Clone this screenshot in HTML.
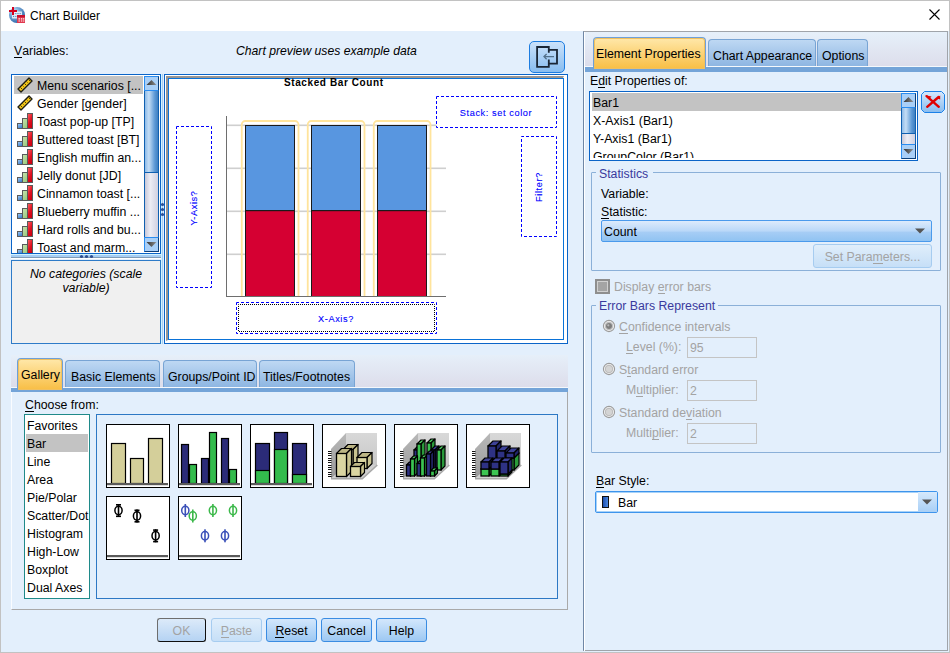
<!DOCTYPE html><html><head><meta charset="utf-8"><style>
html,body{margin:0;padding:0}
body{width:950px;height:653px;position:relative;overflow:hidden;background:#E3EFFC;font-family:"Liberation Sans",sans-serif;font-size:12.3px;color:#000}
div,svg{position:absolute;box-sizing:border-box}
.t{white-space:nowrap;line-height:14px}
u{text-decoration:none;border-bottom:1px solid currentColor;line-height:11px;display:inline-block}
.dis{color:#A3A3A3}
.btn{border:1px solid #3A8CE2;border-radius:3px;background:linear-gradient(#D3E7FC,#9DC8F3);text-align:center;line-height:14px;padding-top:5px}
.tab{border:1px solid #78A4D4;border-bottom:none;border-radius:4px 4px 0 0;background:linear-gradient(#BED8F3,#8EB6E2);line-height:14px;white-space:nowrap}
.tabsel{border:1px solid #6EA0D8;border-bottom:none;border-radius:4px 4px 0 0;box-shadow:inset 0 0 0 1px #F0C060;background:linear-gradient(#FFE8AA,#F8BE44);line-height:14px;white-space:nowrap}
</style></head><body>

<div style="left:0px;top:0px;width:950px;height:31px;background:#fff"></div>
<div style="left:0px;top:0px;width:950px;height:653px;border:1px solid #C2C2C2"></div>
<svg style="left:8px;top:6px" width="18" height="18" viewBox="0 0 18 18">
<defs><radialGradient id="gi" cx="35%" cy="30%" r="75%"><stop offset="0" stop-color="#D8ECFA"/><stop offset="0.4" stop-color="#7AAAD8"/><stop offset="1" stop-color="#2A64A8"/></radialGradient></defs>
<circle cx="9" cy="9" r="8" fill="url(#gi)"/>
<rect x="4" y="5.5" width="10" height="7" fill="#F2F6FB" opacity="0.85"/>
<path d="M5 7.6h8M5 10.4h8" stroke="#4A80C0" stroke-width="1" stroke-dasharray="1.2 1"/>
<rect x="1" y="4" width="8" height="2" fill="#D4001E"/><rect x="4" y="1" width="2" height="8" fill="#D4001E"/>
<rect x="9" y="9" width="8" height="8" fill="#E0384E"/><rect x="9" y="9" width="8" height="2.2" fill="#C8102E"/>
<path d="M10.5 12.2h1.4v1.2h-1.4zM12.9 12.2h1.4v1.2h-1.4zM15.1 12.2h1.2v1.2h-1.2zM10.5 14.4h1.4v1.2h-1.4zM12.9 14.4h1.4v1.2h-1.4zM15.1 14.4h1.2v1.2h-1.2z" fill="#fff"/>
</svg>
<div class="t" style="left:30px;top:9px;font-size:12px">Chart Builder</div>
<svg style="left:929px;top:9px" width="11" height="11" viewBox="0 0 11 11"><path d="M0.5 0.5L10.5 10.5M10.5 0.5L0.5 10.5" stroke="#000" stroke-width="1.1"/></svg>
<div class="t" style="left:14px;top:44px;"><u>V</u>ariables:</div>
<div class="t" style="left:236px;top:44px;font-style:italic;font-size:12.2px">Chart preview uses example data</div>
<div style="left:529px;top:41px;width:36px;height:32px;border:1px solid #1C7CE0;border-radius:5px;background:linear-gradient(#CBE2FA,#88BDF0)"></div>
<svg style="left:536px;top:46px" width="23" height="23" viewBox="0 0 23 23">
<path d="M12.8 6.8V1H1.1V20.9H12.8V13.6" fill="none" stroke="#1A2635" stroke-width="1.8"/>
<path d="M12.8 3.9H21V17.7H12.8" fill="none" stroke="#1A2635" stroke-width="1.8"/>
<path d="M8 10.6H18M10.6 8L8 10.6L10.6 13.2" fill="none" stroke="#52708A" stroke-width="1.3"/>
</svg>
<div style="left:11px;top:74px;width:150px;height:180px;background:#fff;border:1px solid #0A64C8"></div>
<div style="left:14px;top:76px;width:129px;height:18px;background:#C3C3C3"></div>
<div style="left:12px;top:75px;width:132px;height:178px;overflow:hidden">
<svg style="left:5px;top:2px" width="16" height="16" viewBox="0 0 16 16">
<path d="M1 12L12 1L15 4L4 15Z" fill="#F5C816" stroke="#1E1E14" stroke-width="1.4" stroke-linejoin="round"/>
<path d="M3.6 10.6l1.3 1.3M5.6 8.6l0.9 0.9M7.6 6.6l1.3 1.3M9.6 4.6l0.9 0.9M11.6 2.6l1.3 1.3" stroke="#3A3010" stroke-width="1"/>
</svg>
<div class="t" style="left:25px;top:4px">Menu scenarios [...</div>
<svg style="left:5px;top:20px" width="16" height="16" viewBox="0 0 16 16">
<path d="M1 12L12 1L15 4L4 15Z" fill="#F5C816" stroke="#1E1E14" stroke-width="1.4" stroke-linejoin="round"/>
<path d="M3.6 10.6l1.3 1.3M5.6 8.6l0.9 0.9M7.6 6.6l1.3 1.3M9.6 4.6l0.9 0.9M11.6 2.6l1.3 1.3" stroke="#3A3010" stroke-width="1"/>
</svg>
<div class="t" style="left:25px;top:22px">Gender [gender]</div>
<svg style="left:5px;top:38px" width="17" height="17" viewBox="0 0 17 17">
<rect x="0.5" y="10.5" width="5" height="5" fill="url(#ob)" stroke="#5A5A5A" stroke-width="1"/>
<defs><linearGradient id="og" x1="0" y1="0" x2="0.6" y2="1"><stop offset="0" stop-color="#C8E4B0"/><stop offset="1" stop-color="#9CCB80"/></linearGradient><linearGradient id="or" x1="0" y1="0" x2="0.7" y2="1"><stop offset="0" stop-color="#FF6A6A"/><stop offset="0.6" stop-color="#E01020"/><stop offset="1" stop-color="#C80010"/></linearGradient><linearGradient id="ob" x1="0" y1="0" x2="0.6" y2="1"><stop offset="0" stop-color="#A8D0F8"/><stop offset="1" stop-color="#3A7CC8"/></linearGradient></defs>
<rect x="5.5" y="5.5" width="5" height="10" fill="url(#og)" stroke="#5A5A5A" stroke-width="1"/>
<rect x="10.5" y="0.5" width="5" height="15" fill="url(#or)" stroke="#5A5A5A" stroke-width="1"/>
</svg>
<div class="t" style="left:25px;top:40px">Toast pop-up [TP]</div>
<svg style="left:5px;top:56px" width="17" height="17" viewBox="0 0 17 17">
<rect x="0.5" y="10.5" width="5" height="5" fill="url(#ob)" stroke="#5A5A5A" stroke-width="1"/>
<defs><linearGradient id="og" x1="0" y1="0" x2="0.6" y2="1"><stop offset="0" stop-color="#C8E4B0"/><stop offset="1" stop-color="#9CCB80"/></linearGradient><linearGradient id="or" x1="0" y1="0" x2="0.7" y2="1"><stop offset="0" stop-color="#FF6A6A"/><stop offset="0.6" stop-color="#E01020"/><stop offset="1" stop-color="#C80010"/></linearGradient><linearGradient id="ob" x1="0" y1="0" x2="0.6" y2="1"><stop offset="0" stop-color="#A8D0F8"/><stop offset="1" stop-color="#3A7CC8"/></linearGradient></defs>
<rect x="5.5" y="5.5" width="5" height="10" fill="url(#og)" stroke="#5A5A5A" stroke-width="1"/>
<rect x="10.5" y="0.5" width="5" height="15" fill="url(#or)" stroke="#5A5A5A" stroke-width="1"/>
</svg>
<div class="t" style="left:25px;top:58px">Buttered toast [BT]</div>
<svg style="left:5px;top:74px" width="17" height="17" viewBox="0 0 17 17">
<rect x="0.5" y="10.5" width="5" height="5" fill="url(#ob)" stroke="#5A5A5A" stroke-width="1"/>
<defs><linearGradient id="og" x1="0" y1="0" x2="0.6" y2="1"><stop offset="0" stop-color="#C8E4B0"/><stop offset="1" stop-color="#9CCB80"/></linearGradient><linearGradient id="or" x1="0" y1="0" x2="0.7" y2="1"><stop offset="0" stop-color="#FF6A6A"/><stop offset="0.6" stop-color="#E01020"/><stop offset="1" stop-color="#C80010"/></linearGradient><linearGradient id="ob" x1="0" y1="0" x2="0.6" y2="1"><stop offset="0" stop-color="#A8D0F8"/><stop offset="1" stop-color="#3A7CC8"/></linearGradient></defs>
<rect x="5.5" y="5.5" width="5" height="10" fill="url(#og)" stroke="#5A5A5A" stroke-width="1"/>
<rect x="10.5" y="0.5" width="5" height="15" fill="url(#or)" stroke="#5A5A5A" stroke-width="1"/>
</svg>
<div class="t" style="left:25px;top:76px">English muffin an...</div>
<svg style="left:5px;top:92px" width="17" height="17" viewBox="0 0 17 17">
<rect x="0.5" y="10.5" width="5" height="5" fill="url(#ob)" stroke="#5A5A5A" stroke-width="1"/>
<defs><linearGradient id="og" x1="0" y1="0" x2="0.6" y2="1"><stop offset="0" stop-color="#C8E4B0"/><stop offset="1" stop-color="#9CCB80"/></linearGradient><linearGradient id="or" x1="0" y1="0" x2="0.7" y2="1"><stop offset="0" stop-color="#FF6A6A"/><stop offset="0.6" stop-color="#E01020"/><stop offset="1" stop-color="#C80010"/></linearGradient><linearGradient id="ob" x1="0" y1="0" x2="0.6" y2="1"><stop offset="0" stop-color="#A8D0F8"/><stop offset="1" stop-color="#3A7CC8"/></linearGradient></defs>
<rect x="5.5" y="5.5" width="5" height="10" fill="url(#og)" stroke="#5A5A5A" stroke-width="1"/>
<rect x="10.5" y="0.5" width="5" height="15" fill="url(#or)" stroke="#5A5A5A" stroke-width="1"/>
</svg>
<div class="t" style="left:25px;top:94px">Jelly donut [JD]</div>
<svg style="left:5px;top:110px" width="17" height="17" viewBox="0 0 17 17">
<rect x="0.5" y="10.5" width="5" height="5" fill="url(#ob)" stroke="#5A5A5A" stroke-width="1"/>
<defs><linearGradient id="og" x1="0" y1="0" x2="0.6" y2="1"><stop offset="0" stop-color="#C8E4B0"/><stop offset="1" stop-color="#9CCB80"/></linearGradient><linearGradient id="or" x1="0" y1="0" x2="0.7" y2="1"><stop offset="0" stop-color="#FF6A6A"/><stop offset="0.6" stop-color="#E01020"/><stop offset="1" stop-color="#C80010"/></linearGradient><linearGradient id="ob" x1="0" y1="0" x2="0.6" y2="1"><stop offset="0" stop-color="#A8D0F8"/><stop offset="1" stop-color="#3A7CC8"/></linearGradient></defs>
<rect x="5.5" y="5.5" width="5" height="10" fill="url(#og)" stroke="#5A5A5A" stroke-width="1"/>
<rect x="10.5" y="0.5" width="5" height="15" fill="url(#or)" stroke="#5A5A5A" stroke-width="1"/>
</svg>
<div class="t" style="left:25px;top:112px">Cinnamon toast [...</div>
<svg style="left:5px;top:128px" width="17" height="17" viewBox="0 0 17 17">
<rect x="0.5" y="10.5" width="5" height="5" fill="url(#ob)" stroke="#5A5A5A" stroke-width="1"/>
<defs><linearGradient id="og" x1="0" y1="0" x2="0.6" y2="1"><stop offset="0" stop-color="#C8E4B0"/><stop offset="1" stop-color="#9CCB80"/></linearGradient><linearGradient id="or" x1="0" y1="0" x2="0.7" y2="1"><stop offset="0" stop-color="#FF6A6A"/><stop offset="0.6" stop-color="#E01020"/><stop offset="1" stop-color="#C80010"/></linearGradient><linearGradient id="ob" x1="0" y1="0" x2="0.6" y2="1"><stop offset="0" stop-color="#A8D0F8"/><stop offset="1" stop-color="#3A7CC8"/></linearGradient></defs>
<rect x="5.5" y="5.5" width="5" height="10" fill="url(#og)" stroke="#5A5A5A" stroke-width="1"/>
<rect x="10.5" y="0.5" width="5" height="15" fill="url(#or)" stroke="#5A5A5A" stroke-width="1"/>
</svg>
<div class="t" style="left:25px;top:130px">Blueberry muffin ...</div>
<svg style="left:5px;top:146px" width="17" height="17" viewBox="0 0 17 17">
<rect x="0.5" y="10.5" width="5" height="5" fill="url(#ob)" stroke="#5A5A5A" stroke-width="1"/>
<defs><linearGradient id="og" x1="0" y1="0" x2="0.6" y2="1"><stop offset="0" stop-color="#C8E4B0"/><stop offset="1" stop-color="#9CCB80"/></linearGradient><linearGradient id="or" x1="0" y1="0" x2="0.7" y2="1"><stop offset="0" stop-color="#FF6A6A"/><stop offset="0.6" stop-color="#E01020"/><stop offset="1" stop-color="#C80010"/></linearGradient><linearGradient id="ob" x1="0" y1="0" x2="0.6" y2="1"><stop offset="0" stop-color="#A8D0F8"/><stop offset="1" stop-color="#3A7CC8"/></linearGradient></defs>
<rect x="5.5" y="5.5" width="5" height="10" fill="url(#og)" stroke="#5A5A5A" stroke-width="1"/>
<rect x="10.5" y="0.5" width="5" height="15" fill="url(#or)" stroke="#5A5A5A" stroke-width="1"/>
</svg>
<div class="t" style="left:25px;top:148px">Hard rolls and bu...</div>
<svg style="left:5px;top:164px" width="17" height="17" viewBox="0 0 17 17">
<rect x="0.5" y="10.5" width="5" height="5" fill="url(#ob)" stroke="#5A5A5A" stroke-width="1"/>
<defs><linearGradient id="og" x1="0" y1="0" x2="0.6" y2="1"><stop offset="0" stop-color="#C8E4B0"/><stop offset="1" stop-color="#9CCB80"/></linearGradient><linearGradient id="or" x1="0" y1="0" x2="0.7" y2="1"><stop offset="0" stop-color="#FF6A6A"/><stop offset="0.6" stop-color="#E01020"/><stop offset="1" stop-color="#C80010"/></linearGradient><linearGradient id="ob" x1="0" y1="0" x2="0.6" y2="1"><stop offset="0" stop-color="#A8D0F8"/><stop offset="1" stop-color="#3A7CC8"/></linearGradient></defs>
<rect x="5.5" y="5.5" width="5" height="10" fill="url(#og)" stroke="#5A5A5A" stroke-width="1"/>
<rect x="10.5" y="0.5" width="5" height="15" fill="url(#or)" stroke="#5A5A5A" stroke-width="1"/>
</svg>
<div class="t" style="left:25px;top:166px">Toast and marm...</div>
</div>
<div style="left:144px;top:76px;width:15px;height:176px;background:linear-gradient(90deg,#C8C8D8,#EDEDF5 40%,#D0D0E0);border:1px solid #1060B0"></div>
<div style="left:144px;top:90px;width:15px;height:83px;background:linear-gradient(90deg,#8EBBE8,#C4DDF5 30%,#5C99D6 75%,#3F7FC0);border:1px solid #1060B0"></div>
<div style="left:144px;top:76px;width:15px;height:15px;background:#A9CFF7;border:1px solid #2A8CF0;border-right-color:#0B3F7A"></div>
<div style="left:144px;top:237px;width:15px;height:15px;background:#A9CFF7;border:1px solid #2A8CF0;border-right-color:#0B3F7A;border-bottom-color:#0B3F7A"></div>
<svg style="left:146px;top:79px" width="11" height="7"><defs><linearGradient id="ag" x1="0" x2="1"><stop offset="0" stop-color="#303030"/><stop offset="1" stop-color="#909090"/></linearGradient></defs><path d="M0.5 6L5.5 1L10.5 6Z" fill="url(#ag)"/></svg>
<svg style="left:146px;top:241px" width="11" height="7"><path d="M0.5 1L5.5 6L10.5 1Z" fill="url(#ag)"/></svg>
<div style="left:161px;top:74px;width:1px;height:270px;background:#D2F4FF"></div>
<div style="left:162px;top:74px;width:1px;height:270px;background:#A6CDF3"></div>
<svg style="left:160px;top:201px" width="5" height="16"><circle cx="2.5" cy="3.5" r="1.6" fill="#2E4E90"/><circle cx="2.5" cy="8.5" r="1.6" fill="#2E4E90"/><circle cx="2.5" cy="13.5" r="1.6" fill="#2E4E90"/></svg>
<div style="left:11px;top:254px;width:150px;height:1px;background:#D2F4FF"></div>
<div style="left:11px;top:255px;width:150px;height:2px;background:#A6CDF3"></div>
<div style="left:11px;top:257px;width:150px;height:1px;background:#7E9CB8"></div>
<div style="left:11px;top:258px;width:150px;height:1px;background:#FFFFFF"></div>
<svg style="left:78px;top:254px" width="16" height="5"><circle cx="3.5" cy="2.5" r="1.6" fill="#2E4E90"/><circle cx="8.5" cy="2.5" r="1.6" fill="#2E4E90"/><circle cx="13.5" cy="2.5" r="1.6" fill="#2E4E90"/></svg>
<div style="left:11px;top:260px;width:150px;height:84px;background:#F0F0F0;border:1px solid #2E7BC8"></div>
<div class="t" style="left:16.0px;top:267px;width:140px;text-align:center;font-style:italic">No categories (scale</div>
<div class="t" style="left:16.0px;top:281px;width:140px;text-align:center;font-style:italic">variable)</div>
<div style="left:164px;top:74px;width:404px;height:270px;border:1px solid #0A64C8;background:#fff"></div>
<div style="left:166px;top:76px;width:398px;height:265px;border-top:2px solid #9A9590;border-left:2px solid #9A9590;border-right:1px solid #fff;border-bottom:1px solid #fff"></div>
<div style="left:168px;top:78px;width:396px;height:262px;border:1px solid #0A72D8;background:#fff"></div>
<svg style="left:0;top:0" width="950" height="653" viewBox="0 0 950 653"><rect x="227" y="124.5" width="219" height="1.6" fill="#CFCFCF"/><rect x="227" y="167.5" width="219" height="1.6" fill="#CFCFCF"/><rect x="227" y="210.5" width="219" height="1.6" fill="#CFCFCF"/><rect x="227" y="253.5" width="219" height="1.6" fill="#CFCFCF"/><rect x="226" y="116" width="1" height="181" fill="#6E6E6E"/><rect x="226" y="296" width="220" height="1" fill="#6E6E6E"/><rect x="241.75" y="121" width="56.75" height="180" rx="3.5" fill="none" stroke="#FFE49C" stroke-width="1.8"/><rect x="307.75" y="121" width="56.75" height="180" rx="3.5" fill="none" stroke="#FFE49C" stroke-width="1.8"/><rect x="373.75" y="121" width="56.75" height="180" rx="3.5" fill="none" stroke="#FFE49C" stroke-width="1.8"/><rect x="245" y="125" width="50" height="86" fill="#5896E0"/><rect x="245" y="211" width="50" height="85" fill="#D50032"/><rect x="245.5" y="125.5" width="49" height="171" fill="none" stroke="#1A1A1A" stroke-width="1"/><rect x="245" y="210" width="50" height="1.2" fill="#1A1A1A"/><rect x="311" y="125" width="50" height="86" fill="#5896E0"/><rect x="311" y="211" width="50" height="85" fill="#D50032"/><rect x="311.5" y="125.5" width="49" height="171" fill="none" stroke="#1A1A1A" stroke-width="1"/><rect x="311" y="210" width="50" height="1.2" fill="#1A1A1A"/><rect x="377" y="125" width="50" height="86" fill="#5896E0"/><rect x="377" y="211" width="50" height="85" fill="#D50032"/><rect x="377.5" y="125.5" width="49" height="171" fill="none" stroke="#1A1A1A" stroke-width="1"/><rect x="377" y="210" width="50" height="1.2" fill="#1A1A1A"/><rect x="230" y="297" width="210" height="5" fill="#fff"/><rect x="226" y="296" width="220" height="1" fill="#6E6E6E"/><rect x="436.5" y="96.5" width="120" height="31" fill="#fff" stroke="#0000FF" stroke-width="1" stroke-dasharray="3 2" stroke-dashoffset="0.5"/><rect x="521.5" y="136.5" width="35" height="100" fill="#fff" stroke="#0000FF" stroke-width="1" stroke-dasharray="3 2" stroke-dashoffset="0.5"/><rect x="176.5" y="126.5" width="35" height="161" fill="#fff" stroke="#0000FF" stroke-width="1" stroke-dasharray="3 2" stroke-dashoffset="0.5"/><rect x="236.5" y="302.5" width="200" height="31" fill="#fff" stroke="#0000FF" stroke-width="1" stroke-dasharray="3 2" stroke-dashoffset="0.5"/><rect x="238.5" y="304.5" width="196" height="27" fill="none" stroke="#000" stroke-width="1" stroke-dasharray="1 1" stroke-dashoffset="0.5"/></svg>
<div class="t" style="left:284px;top:77px;font-size:10px;font-weight:bold;letter-spacing:0.6px;line-height:12px">Stacked Bar Count</div>
<div class="t" style="left:446px;top:107px;width:100px;text-align:center;font-size:9.2px;letter-spacing:0.6px;color:#0000FF;-webkit-text-stroke:0.1px #0000FF;line-height:12px">Stack: set color</div>
<div class="t" style="left:286px;top:313px;width:100px;text-align:center;font-size:9.2px;letter-spacing:0.6px;color:#0000FF;-webkit-text-stroke:0.1px #0000FF;line-height:12px">X-Axis?</div>
<div class="t" style="left:144px;top:202px;width:100px;text-align:center;font-size:9.2px;letter-spacing:0.6px;color:#0000FF;-webkit-text-stroke:0.1px #0000FF;line-height:12px;transform:rotate(-90deg)">Y-Axis?</div>
<div class="t" style="left:489px;top:181px;width:100px;text-align:center;font-size:9.2px;letter-spacing:0.6px;color:#0000FF;-webkit-text-stroke:0.1px #0000FF;line-height:12px;transform:rotate(-90deg)">Filter?</div>
<div style="left:11px;top:355px;width:557px;height:34px;background:linear-gradient(#E6EFF9,#DCDCEA)"></div>
<div style="left:11px;top:387px;width:557px;height:1px;background:#F4F8FC"></div>
<div style="left:11px;top:388px;width:557px;height:4px;background:#74A4D8"></div>
<div style="left:11px;top:392px;width:557px;height:218px;border:1px solid #A9A9A9;border-top:none;border-left-color:#FAFCFF;background:#E3EFFC"></div>
<div class="tab" style="left:65px;top:360px;width:95px;height:27px;padding:9px 0 0 5px">Basic Elements</div>
<div class="tab" style="left:163px;top:360px;width:94px;height:27px;padding:9px 0 0 4px">Groups/Point ID</div>
<div class="tab" style="left:259px;top:360px;width:96px;height:27px;padding:9px 0 0 3px">Titles/Footnotes</div>
<div class="tabsel" style="left:17px;top:358px;width:46px;height:32px;padding:9px 0 0 3px">Gallery</div>
<div class="t" style="left:25px;top:398px;"><u>C</u>hoose from:</div>
<div style="left:24px;top:414px;width:66px;height:185px;background:#fff;border:1px solid #1F8A8A"></div>
<div style="left:26px;top:434px;width:62px;height:18px;background:#C3C3C3"></div>
<div class="t" style="left:27px;top:419px;">Favorites</div>
<div class="t" style="left:27px;top:437px;">Bar</div>
<div class="t" style="left:27px;top:455px;">Line</div>
<div class="t" style="left:27px;top:473px;">Area</div>
<div class="t" style="left:27px;top:491px;">Pie/Polar</div>
<div class="t" style="left:27px;top:509px;">Scatter/Dot</div>
<div class="t" style="left:27px;top:527px;">Histogram</div>
<div class="t" style="left:27px;top:545px;">High-Low</div>
<div class="t" style="left:27px;top:563px;">Boxplot</div>
<div class="t" style="left:27px;top:581px;">Dual Axes</div>
<div style="left:96px;top:414px;width:462px;height:185px;border:1px solid #2D78C4"></div>
<svg style="left:106px;top:424px" width="64" height="64" viewBox="0 0 64 64"><rect x="0.5" y="0.5" width="63" height="63" fill="#fff" stroke="#000" stroke-width="1"/><rect x="5.5" y="19.5" width="14" height="40" fill="#D4CF9A" stroke="#000" stroke-width="1.2"/><rect x="24.5" y="34.5" width="13" height="25" fill="#D4CF9A" stroke="#000" stroke-width="1.2"/><rect x="42.5" y="14.5" width="14" height="45" fill="#D4CF9A" stroke="#000" stroke-width="1.2"/><rect x="1" y="59" width="61" height="2.2" fill="#5A5A5A"/></svg>
<svg style="left:178px;top:424px" width="64" height="64" viewBox="0 0 64 64"><rect x="0.5" y="0.5" width="63" height="63" fill="#fff" stroke="#000" stroke-width="1"/><rect x="3.5" y="20.5" width="7" height="39" fill="#2B2B78" stroke="#000" stroke-width="1.2"/><rect x="11.5" y="40.5" width="7" height="19" fill="#33BB4C" stroke="#000" stroke-width="1.2"/><rect x="23.5" y="34.5" width="7" height="25" fill="#2B2B78" stroke="#000" stroke-width="1.2"/><rect x="31.5" y="8.5" width="7" height="51" fill="#33BB4C" stroke="#000" stroke-width="1.2"/><rect x="43.5" y="14.5" width="7" height="45" fill="#2B2B78" stroke="#000" stroke-width="1.2"/><rect x="51.5" y="45.5" width="7" height="14" fill="#33BB4C" stroke="#000" stroke-width="1.2"/><rect x="1" y="59" width="61" height="2.2" fill="#5A5A5A"/></svg>
<svg style="left:250px;top:424px" width="64" height="64" viewBox="0 0 64 64"><rect x="0.5" y="0.5" width="63" height="63" fill="#fff" stroke="#000" stroke-width="1"/><rect x="5.5" y="19.5" width="14" height="40" fill="#2B2B78" stroke="#000" stroke-width="1.2"/><rect x="5.5" y="46.5" width="14" height="13" fill="#33BB4C" stroke="#000" stroke-width="1.2"/><rect x="24.5" y="8.5" width="13" height="51" fill="#2B2B78" stroke="#000" stroke-width="1.2"/><rect x="24.5" y="25.5" width="13" height="34" fill="#33BB4C" stroke="#000" stroke-width="1.2"/><rect x="42.5" y="19.5" width="14" height="40" fill="#2B2B78" stroke="#000" stroke-width="1.2"/><rect x="42.5" y="50.5" width="14" height="9" fill="#33BB4C" stroke="#000" stroke-width="1.2"/><rect x="1" y="59" width="61" height="2.2" fill="#5A5A5A"/></svg>
<svg style="left:322px;top:424px" width="64" height="64" viewBox="0 0 64 64"><rect x="0.5" y="0.5" width="63" height="63" fill="#fff" stroke="#000" stroke-width="1"/><defs><linearGradient id="wl" x1="0" y1="0" x2="0" y2="1"><stop offset="0" stop-color="#B8B8B8"/><stop offset="1" stop-color="#9A9A9A"/></linearGradient><linearGradient id="wb" x1="0" y1="0" x2="0" y2="1"><stop offset="0" stop-color="#D8D8D8"/><stop offset="1" stop-color="#C8C8C8"/></linearGradient></defs><path d="M9 25L24 9V41L9 55Z" fill="url(#wl)"/><path d="M24 9H55V41H24Z" fill="url(#wb)"/><path d="M9 55H40L55 41H24Z" fill="#D0D0D0"/><path d="M9 54.8H40.3L55.3 41" fill="none" stroke="#A8A8A8" stroke-width="1.6"/><rect x="6" y="27" width="3.5" height="1" fill="#111"/><rect x="6" y="29" width="3.5" height="1" fill="#111"/><rect x="6" y="31" width="3.5" height="1" fill="#111"/><rect x="6" y="34" width="3.5" height="1" fill="#111"/><rect x="6" y="36" width="3.5" height="1" fill="#111"/><rect x="6" y="38" width="3.5" height="1" fill="#111"/><rect x="6" y="41" width="3.5" height="1" fill="#111"/><rect x="6" y="43" width="3.5" height="1" fill="#111"/><rect x="6" y="45" width="3.5" height="1" fill="#111"/><rect x="6" y="48" width="3.5" height="1" fill="#111"/><rect x="6" y="50" width="3.5" height="1" fill="#111"/><rect x="6" y="52" width="3.5" height="1" fill="#111"/><path d="M21 25.5L26 20.5H36L31 25.5Z" fill="#BDB685" stroke="#000" stroke-width="1.2" stroke-linejoin="round"/><path d="M31 25.5L36 20.5V41.5L31 46.5Z" fill="#C9C390" stroke="#000" stroke-width="1.2" stroke-linejoin="round"/><rect x="21" y="25.5" width="10" height="21" fill="#DAD5A2" stroke="#000" stroke-width="1.3"/><path d="M35 33.5L40 28.5H50L45 33.5Z" fill="#BDB685" stroke="#000" stroke-width="1.2" stroke-linejoin="round"/><path d="M45 33.5L50 28.5V39.5L45 44.5Z" fill="#C9C390" stroke="#000" stroke-width="1.2" stroke-linejoin="round"/><rect x="35" y="33.5" width="10" height="11" fill="#DAD5A2" stroke="#000" stroke-width="1.3"/><path d="M14.5 29.5L19.5 24.5H29.5L24.5 29.5Z" fill="#BDB685" stroke="#000" stroke-width="1.2" stroke-linejoin="round"/><path d="M24.5 29.5L29.5 24.5V47.5L24.5 52.5Z" fill="#C9C390" stroke="#000" stroke-width="1.2" stroke-linejoin="round"/><rect x="14.5" y="29.5" width="10" height="23" fill="#DAD5A2" stroke="#000" stroke-width="1.3"/><path d="M28.5 42.5L32.5 38.5H42.5L38.5 42.5Z" fill="#BDB685" stroke="#000" stroke-width="1.2" stroke-linejoin="round"/><path d="M38.5 42.5L42.5 38.5V48.5L38.5 52.5Z" fill="#C9C390" stroke="#000" stroke-width="1.2" stroke-linejoin="round"/><rect x="28.5" y="42.5" width="10" height="10" fill="#DAD5A2" stroke="#000" stroke-width="1.3"/></svg>
<svg style="left:394px;top:424px" width="64" height="64" viewBox="0 0 64 64"><rect x="0.5" y="0.5" width="63" height="63" fill="#fff" stroke="#000" stroke-width="1"/><defs><linearGradient id="wl" x1="0" y1="0" x2="0" y2="1"><stop offset="0" stop-color="#B8B8B8"/><stop offset="1" stop-color="#9A9A9A"/></linearGradient><linearGradient id="wb" x1="0" y1="0" x2="0" y2="1"><stop offset="0" stop-color="#D8D8D8"/><stop offset="1" stop-color="#C8C8C8"/></linearGradient></defs><path d="M9 25L24 9V41L9 55Z" fill="url(#wl)"/><path d="M24 9H55V41H24Z" fill="url(#wb)"/><path d="M9 55H40L55 41H24Z" fill="#D0D0D0"/><path d="M9 54.8H40.3L55.3 41" fill="none" stroke="#A8A8A8" stroke-width="1.6"/><rect x="6" y="27" width="3.5" height="1" fill="#111"/><rect x="6" y="29" width="3.5" height="1" fill="#111"/><rect x="6" y="31" width="3.5" height="1" fill="#111"/><rect x="6" y="34" width="3.5" height="1" fill="#111"/><rect x="6" y="36" width="3.5" height="1" fill="#111"/><rect x="6" y="38" width="3.5" height="1" fill="#111"/><rect x="6" y="41" width="3.5" height="1" fill="#111"/><rect x="6" y="43" width="3.5" height="1" fill="#111"/><rect x="6" y="45" width="3.5" height="1" fill="#111"/><rect x="6" y="48" width="3.5" height="1" fill="#111"/><rect x="6" y="50" width="3.5" height="1" fill="#111"/><rect x="6" y="52" width="3.5" height="1" fill="#111"/><path d="M20 26L24 22H28L24 26Z" fill="#3E4298" stroke="#000" stroke-width="1.2" stroke-linejoin="round"/><path d="M24 26L28 22V42L24 46Z" fill="#22256A" stroke="#000" stroke-width="1.2" stroke-linejoin="round"/><rect x="20" y="26" width="4" height="20" fill="#2E3284" stroke="#000" stroke-width="1.3"/><path d="M23 20L27 16H31L27 20Z" fill="#4CD060" stroke="#000" stroke-width="1.2" stroke-linejoin="round"/><path d="M27 20L31 16V42L27 46Z" fill="#2A9A3A" stroke="#000" stroke-width="1.2" stroke-linejoin="round"/><rect x="23" y="20" width="4" height="26" fill="#3CC452" stroke="#000" stroke-width="1.3"/><path d="M33 19L37 15H41L37 19Z" fill="#4CD060" stroke="#000" stroke-width="1.2" stroke-linejoin="round"/><path d="M37 19L41 15V42L37 46Z" fill="#2A9A3A" stroke="#000" stroke-width="1.2" stroke-linejoin="round"/><rect x="33" y="19" width="4" height="27" fill="#3CC452" stroke="#000" stroke-width="1.3"/><path d="M37 26L41 22H45L41 26Z" fill="#3E4298" stroke="#000" stroke-width="1.2" stroke-linejoin="round"/><path d="M41 26L45 22V42L41 46Z" fill="#22256A" stroke="#000" stroke-width="1.2" stroke-linejoin="round"/><rect x="37" y="26" width="4" height="20" fill="#2E3284" stroke="#000" stroke-width="1.3"/><path d="M43 26L47 22H51L47 26Z" fill="#4CD060" stroke="#000" stroke-width="1.2" stroke-linejoin="round"/><path d="M47 26L51 22V42L47 46Z" fill="#2A9A3A" stroke="#000" stroke-width="1.2" stroke-linejoin="round"/><rect x="43" y="26" width="4" height="20" fill="#3CC452" stroke="#000" stroke-width="1.3"/><path d="M12.5 41L15.5 38H19.5L16.5 41Z" fill="#3E4298" stroke="#000" stroke-width="1.2" stroke-linejoin="round"/><path d="M16.5 41L19.5 38V49L16.5 52Z" fill="#22256A" stroke="#000" stroke-width="1.2" stroke-linejoin="round"/><rect x="12.5" y="41" width="4" height="11" fill="#2E3284" stroke="#000" stroke-width="1.3"/><path d="M16.5 35L19.5 32H23.5L20.5 35Z" fill="#4CD060" stroke="#000" stroke-width="1.2" stroke-linejoin="round"/><path d="M20.5 35L23.5 32V49L20.5 52Z" fill="#2A9A3A" stroke="#000" stroke-width="1.2" stroke-linejoin="round"/><rect x="16.5" y="35" width="4" height="17" fill="#3CC452" stroke="#000" stroke-width="1.3"/><path d="M23 39.5L26 36.5H30L27 39.5Z" fill="#3E4298" stroke="#000" stroke-width="1.2" stroke-linejoin="round"/><path d="M27 39.5L30 36.5V49.0L27 52.0Z" fill="#22256A" stroke="#000" stroke-width="1.2" stroke-linejoin="round"/><rect x="23" y="39.5" width="4" height="12.5" fill="#2E3284" stroke="#000" stroke-width="1.3"/><path d="M26.5 34L29.5 31H33.5L30.5 34Z" fill="#4CD060" stroke="#000" stroke-width="1.2" stroke-linejoin="round"/><path d="M30.5 34L33.5 31V49L30.5 52Z" fill="#2A9A3A" stroke="#000" stroke-width="1.2" stroke-linejoin="round"/><rect x="26.5" y="34" width="4" height="18" fill="#3CC452" stroke="#000" stroke-width="1.3"/><path d="M32.5 30L35.5 27H39.5L36.5 30Z" fill="#3E4298" stroke="#000" stroke-width="1.2" stroke-linejoin="round"/><path d="M36.5 30L39.5 27V49L36.5 52Z" fill="#22256A" stroke="#000" stroke-width="1.2" stroke-linejoin="round"/><rect x="32.5" y="30" width="4" height="22" fill="#2E3284" stroke="#000" stroke-width="1.3"/><path d="M36.5 47L39.5 44H43.5L40.5 47Z" fill="#4CD060" stroke="#000" stroke-width="1.2" stroke-linejoin="round"/><path d="M40.5 47L43.5 44V49L40.5 52Z" fill="#2A9A3A" stroke="#000" stroke-width="1.2" stroke-linejoin="round"/><rect x="36.5" y="47" width="4" height="5" fill="#3CC452" stroke="#000" stroke-width="1.3"/></svg>
<svg style="left:466px;top:424px" width="64" height="64" viewBox="0 0 64 64"><rect x="0.5" y="0.5" width="63" height="63" fill="#fff" stroke="#000" stroke-width="1"/><defs><linearGradient id="wl" x1="0" y1="0" x2="0" y2="1"><stop offset="0" stop-color="#B8B8B8"/><stop offset="1" stop-color="#9A9A9A"/></linearGradient><linearGradient id="wb" x1="0" y1="0" x2="0" y2="1"><stop offset="0" stop-color="#D8D8D8"/><stop offset="1" stop-color="#C8C8C8"/></linearGradient></defs><path d="M9 25L24 9V41L9 55Z" fill="url(#wl)"/><path d="M24 9H55V41H24Z" fill="url(#wb)"/><path d="M9 55H40L55 41H24Z" fill="#D0D0D0"/><path d="M9 54.8H40.3L55.3 41" fill="none" stroke="#A8A8A8" stroke-width="1.6"/><rect x="6" y="27" width="3.5" height="1" fill="#111"/><rect x="6" y="29" width="3.5" height="1" fill="#111"/><rect x="6" y="31" width="3.5" height="1" fill="#111"/><rect x="6" y="34" width="3.5" height="1" fill="#111"/><rect x="6" y="36" width="3.5" height="1" fill="#111"/><rect x="6" y="38" width="3.5" height="1" fill="#111"/><rect x="6" y="41" width="3.5" height="1" fill="#111"/><rect x="6" y="43" width="3.5" height="1" fill="#111"/><rect x="6" y="45" width="3.5" height="1" fill="#111"/><rect x="6" y="48" width="3.5" height="1" fill="#111"/><rect x="6" y="50" width="3.5" height="1" fill="#111"/><rect x="6" y="52" width="3.5" height="1" fill="#111"/><path d="M22 40L27 35H35L30 40Z" fill="#4CD060" stroke="#000" stroke-width="1.2" stroke-linejoin="round"/><path d="M30 40L35 35V41L30 46Z" fill="#2A9A3A" stroke="#000" stroke-width="1.2" stroke-linejoin="round"/><rect x="22" y="40" width="8" height="6" fill="#3CC452" stroke="#000" stroke-width="1.3"/><path d="M22 22L27 17H35L30 22Z" fill="#3E4298" stroke="#000" stroke-width="1.2" stroke-linejoin="round"/><path d="M30 22L35 17V35L30 40Z" fill="#22256A" stroke="#000" stroke-width="1.2" stroke-linejoin="round"/><rect x="22" y="22" width="8" height="18" fill="#2E3284" stroke="#000" stroke-width="1.3"/><path d="M31 40L36 35H44L39 40Z" fill="#4CD060" stroke="#000" stroke-width="1.2" stroke-linejoin="round"/><path d="M39 40L44 35V41L39 46Z" fill="#2A9A3A" stroke="#000" stroke-width="1.2" stroke-linejoin="round"/><rect x="31" y="40" width="8" height="6" fill="#3CC452" stroke="#000" stroke-width="1.3"/><path d="M31 27L36 22H44L39 27Z" fill="#3E4298" stroke="#000" stroke-width="1.2" stroke-linejoin="round"/><path d="M39 27L44 22V35L39 40Z" fill="#22256A" stroke="#000" stroke-width="1.2" stroke-linejoin="round"/><rect x="31" y="27" width="8" height="13" fill="#2E3284" stroke="#000" stroke-width="1.3"/><path d="M40 34L45 29H53L48 34Z" fill="#4CD060" stroke="#000" stroke-width="1.2" stroke-linejoin="round"/><path d="M48 34L53 29V41L48 46Z" fill="#2A9A3A" stroke="#000" stroke-width="1.2" stroke-linejoin="round"/><rect x="40" y="34" width="8" height="12" fill="#3CC452" stroke="#000" stroke-width="1.3"/><path d="M40 29L45 24H53L48 29Z" fill="#3E4298" stroke="#000" stroke-width="1.2" stroke-linejoin="round"/><path d="M48 29L53 24V29L48 34Z" fill="#22256A" stroke="#000" stroke-width="1.2" stroke-linejoin="round"/><rect x="40" y="29" width="8" height="5" fill="#2E3284" stroke="#000" stroke-width="1.3"/><path d="M15 45L19 41H27L23 45Z" fill="#4CD060" stroke="#000" stroke-width="1.2" stroke-linejoin="round"/><path d="M23 45L27 41V48L23 52Z" fill="#2A9A3A" stroke="#000" stroke-width="1.2" stroke-linejoin="round"/><rect x="15" y="45" width="8" height="7" fill="#3CC452" stroke="#000" stroke-width="1.3"/><path d="M15 38L19 34H27L23 38Z" fill="#3E4298" stroke="#000" stroke-width="1.2" stroke-linejoin="round"/><path d="M23 38L27 34V41L23 45Z" fill="#22256A" stroke="#000" stroke-width="1.2" stroke-linejoin="round"/><rect x="15" y="38" width="8" height="7" fill="#2E3284" stroke="#000" stroke-width="1.3"/><path d="M25 45L29 41H37L33 45Z" fill="#4CD060" stroke="#000" stroke-width="1.2" stroke-linejoin="round"/><path d="M33 45L37 41V48L33 52Z" fill="#2A9A3A" stroke="#000" stroke-width="1.2" stroke-linejoin="round"/><rect x="25" y="45" width="8" height="7" fill="#3CC452" stroke="#000" stroke-width="1.3"/><path d="M25 38L29 34H37L33 38Z" fill="#3E4298" stroke="#000" stroke-width="1.2" stroke-linejoin="round"/><path d="M33 38L37 34V41L33 45Z" fill="#22256A" stroke="#000" stroke-width="1.2" stroke-linejoin="round"/><rect x="25" y="38" width="8" height="7" fill="#2E3284" stroke="#000" stroke-width="1.3"/><path d="M34 50L38 46H46L42 50Z" fill="#4CD060" stroke="#000" stroke-width="1.2" stroke-linejoin="round"/><path d="M42 50L46 46V48L42 52Z" fill="#2A9A3A" stroke="#000" stroke-width="1.2" stroke-linejoin="round"/><rect x="34" y="50" width="8" height="2" fill="#3CC452" stroke="#000" stroke-width="1.3"/><path d="M34 38L38 34H46L42 38Z" fill="#3E4298" stroke="#000" stroke-width="1.2" stroke-linejoin="round"/><path d="M42 38L46 34V46L42 50Z" fill="#22256A" stroke="#000" stroke-width="1.2" stroke-linejoin="round"/><rect x="34" y="38" width="8" height="12" fill="#2E3284" stroke="#000" stroke-width="1.3"/></svg>
<svg style="left:106px;top:496px" width="64" height="64" viewBox="0 0 64 64"><rect x="0.5" y="0.5" width="63" height="63" fill="#fff" stroke="#000" stroke-width="1"/><ellipse cx="12.5" cy="14.5" rx="3.6" ry="4.2" fill="none" stroke="#000" stroke-width="1.5"/><rect x="11.7" y="8.0" width="1.6" height="13" fill="#000"/><rect x="10.0" y="8.0" width="5" height="1.6" fill="#000"/><rect x="10.0" y="19.5" width="5" height="1.6" fill="#000"/><ellipse cx="31" cy="20" rx="3.6" ry="4.2" fill="none" stroke="#000" stroke-width="1.5"/><rect x="30.2" y="13.5" width="1.6" height="13" fill="#000"/><rect x="28.5" y="13.5" width="5" height="1.6" fill="#000"/><rect x="28.5" y="25" width="5" height="1.6" fill="#000"/><ellipse cx="49.6" cy="39.8" rx="3.6" ry="4.2" fill="none" stroke="#000" stroke-width="1.5"/><rect x="48.800000000000004" y="33.3" width="1.6" height="13" fill="#000"/><rect x="47.1" y="33.3" width="5" height="1.6" fill="#000"/><rect x="47.1" y="44.8" width="5" height="1.6" fill="#000"/><rect x="1" y="59" width="61" height="2.2" fill="#5A5A5A"/></svg>
<svg style="left:178px;top:496px" width="64" height="64" viewBox="0 0 64 64"><rect x="0.5" y="0.5" width="63" height="63" fill="#fff" stroke="#000" stroke-width="1"/><ellipse cx="7.3" cy="14.5" rx="3.6" ry="4.2" fill="none" stroke="#3A50B8" stroke-width="1.5"/><rect x="6.5" y="8.0" width="1.6" height="13" fill="#3A50B8"/><ellipse cx="14.8" cy="20" rx="3.6" ry="4.2" fill="none" stroke="#3CB84A" stroke-width="1.5"/><rect x="14.0" y="13.5" width="1.6" height="13" fill="#3CB84A"/><ellipse cx="34.9" cy="14.5" rx="3.6" ry="4.2" fill="none" stroke="#3CB84A" stroke-width="1.5"/><rect x="34.1" y="8.0" width="1.6" height="13" fill="#3CB84A"/><ellipse cx="55" cy="14.5" rx="3.6" ry="4.2" fill="none" stroke="#3CB84A" stroke-width="1.5"/><rect x="54.2" y="8.0" width="1.6" height="13" fill="#3CB84A"/><ellipse cx="27" cy="39.8" rx="3.6" ry="4.2" fill="none" stroke="#3A50B8" stroke-width="1.5"/><rect x="26.2" y="33.3" width="1.6" height="13" fill="#3A50B8"/><ellipse cx="47" cy="39.8" rx="3.6" ry="4.2" fill="none" stroke="#3A50B8" stroke-width="1.5"/><rect x="46.2" y="33.3" width="1.6" height="13" fill="#3A50B8"/><rect x="1" y="59" width="61" height="2.2" fill="#5A5A5A"/></svg>
<div class="btn dis" style="left:157px;top:618px;width:49px;height:24px;border:1px solid;border-color:#6E6E6E #101010 #101010 #6E6E6E;background:linear-gradient(#DCEAF9,#B5D3F3)">OK</div>
<div class="btn dis" style="left:211px;top:618px;width:51px;height:24px;border-color:#A6CCF0;background:linear-gradient(#E0EEFB,#C6DFF7)"><u>P</u>aste</div>
<div class="btn" style="left:266px;top:618px;width:51px;height:24px"><u>R</u>eset</div>
<div class="btn" style="left:321px;top:618px;width:51px;height:24px">Cancel</div>
<div class="btn" style="left:376px;top:618px;width:51px;height:24px">Help</div>
<div style="left:583px;top:31px;width:365px;height:620px;border:1px solid #A0A4AA;border-left:1px solid #6F87A6;border-right:1px solid #A0A4AA"></div>
<div style="left:584px;top:32px;width:1px;height:619px;background:#FFFFFF"></div>
<div style="left:585px;top:32px;width:362px;height:36px;background:linear-gradient(#E6F0FA,#DCDCEA)"></div>
<div style="left:585px;top:66px;width:362px;height:1px;background:#F4F8FC"></div>
<div style="left:585px;top:67px;width:362px;height:5px;background:#74A4D8"></div>
<div class="tab" style="left:708px;top:39px;width:108px;height:27px;padding:9px 0 0 4px">Chart Appearance</div>
<div class="tab" style="left:817px;top:39px;width:51px;height:27px;padding:9px 0 0 4px">Options</div>
<div class="tabsel" style="left:593px;top:37px;width:113px;height:32px;padding:9px 0 0 2px">Element Properties</div>
<div class="t" style="left:590px;top:74px;">E<u>d</u>it Properties of:</div>
<div style="left:589px;top:91px;width:329px;height:70px;background:#fff;border:1px solid #0A64C8"></div>
<div style="left:592px;top:93px;width:309px;height:18px;background:#C3C3C3"></div>
<div style="left:590px;top:92px;width:311px;height:66px;overflow:hidden">
<div class="t" style="left:3px;top:4px">Bar1</div>
<div class="t" style="left:3px;top:22px">X-Axis1 (Bar1)</div>
<div class="t" style="left:3px;top:40px">Y-Axis1 (Bar1)</div>
<div class="t" style="left:3px;top:58px">GroupColor (Bar1)</div>
</div>
<div style="left:901px;top:93px;width:15px;height:66px;background:linear-gradient(90deg,#C8C8D8,#EDEDF5 40%,#D0D0E0);border:1px solid #1060B0"></div>
<div style="left:901px;top:107px;width:15px;height:27px;background:linear-gradient(90deg,#8EBBE8,#C4DDF5 30%,#5C99D6 75%,#3F7FC0);border:1px solid #1060B0"></div>
<div style="left:901px;top:93px;width:15px;height:15px;background:#A9CFF7;border:1px solid #2A8CF0;border-right-color:#0B3F7A"></div>
<div style="left:901px;top:144px;width:15px;height:15px;background:#A9CFF7;border:1px solid #2A8CF0;border-right-color:#0B3F7A;border-bottom-color:#0B3F7A"></div>
<svg style="left:903px;top:96px" width="11" height="7"><path d="M0.5 6L5.5 1L10.5 6Z" fill="url(#ag)"/></svg>
<svg style="left:903px;top:148px" width="11" height="7"><path d="M0.5 1L5.5 6L10.5 1Z" fill="url(#ag)"/></svg>
<svg style="left:921px;top:91px" width="24" height="22" viewBox="0 0 24 22"><defs><linearGradient id="dg" x1="0" y1="0" x2="0" y2="1"><stop offset="0" stop-color="#D6E8FC"/><stop offset="1" stop-color="#88BCEF"/></linearGradient></defs><path d="M3.5 0.5H20.5L23.5 3.5V18.5L20.5 21.5H3.5L0.5 18.5V3.5Z" fill="url(#dg)" stroke="#1A80E8" stroke-width="1"/><path d="M5.6 5.2L17.8 15.8M17.6 6L6.2 15.8" stroke="#E00000" stroke-width="2.4" stroke-linecap="round"/><path d="M4.2 4.2L10.5 5.4L8 8.2Z" fill="#E00000"/><path d="M19.2 4.6L19.2 8.4L15.6 7.2Z" fill="#E00000"/></svg>
<div style="left:591px;top:172px;width:350px;height:99px;border:1px solid #8BB0D8;border-radius:1px"></div>
<div style="left:596px;top:165px;width:57px;height:14px;background:#E3EFFC"></div>
<div class="t" style="left:599px;top:167px;color:#3A3A9C">Statistics</div>
<div class="t" style="left:601px;top:187px;">Variable:</div>
<div class="t" style="left:601px;top:205px;"><u>S</u>tatistic:</div>
<div style="left:601px;top:220px;width:331px;height:22px;border:1px solid #4A9AEC;border-radius:2px;background:linear-gradient(#DDEBFC,#BAD8F8 50%,#A6CDF5 56%,#90C3F2)"></div>
<div class="t" style="left:604px;top:225px;">Count</div>
<svg style="left:914px;top:227px" width="12" height="8"><path d="M1 1.5H11L6 6.5Z" fill="#555"/></svg>
<div class="btn dis" style="left:813px;top:244px;width:119px;height:24px;border-color:#A6CCF0;background:linear-gradient(#E0EEFB,#C6DFF7);padding-top:5px">Set Para<u>m</u>eters...</div>
<div style="left:595px;top:279px;width:15px;height:15px;border:2px solid #8E8E8E;background:#A4A4A4;box-shadow:inset 0 0 0 1px #D0D0D0"></div>
<div class="t" style="left:614px;top:280px;color:#A3A3A3">Display <u>e</u>rror bars</div>
<div style="left:591px;top:305px;width:350px;height:148px;border:1px solid #8BB0D8;border-radius:1px"></div>
<div style="left:596px;top:298px;width:122px;height:14px;background:#E3EFFC"></div>
<div class="t" style="left:599px;top:299px;color:#3A3A9C">Error Bars Represent</div>
<svg style="left:602px;top:319px" width="14" height="14"><circle cx="7" cy="7" r="5.6" fill="#F4F4F4" stroke="#9C9C9C" stroke-width="1.1"/><circle cx="7" cy="7" r="3.8" fill="#D4D4D4" stroke="#B0B0B0" stroke-width="0.8"/><circle cx="7" cy="7" r="3" fill="#7E7E7E"/><circle cx="6.3" cy="6.3" r="1.1" fill="#B8B8B8"/></svg>
<svg style="left:602px;top:362px" width="14" height="14"><circle cx="7" cy="7" r="5.6" fill="#F4F4F4" stroke="#9C9C9C" stroke-width="1.1"/><circle cx="7" cy="7" r="3.8" fill="#D4D4D4" stroke="#B0B0B0" stroke-width="0.8"/></svg>
<svg style="left:602px;top:405px" width="14" height="14"><circle cx="7" cy="7" r="5.6" fill="#F4F4F4" stroke="#9C9C9C" stroke-width="1.1"/><circle cx="7" cy="7" r="3.8" fill="#D4D4D4" stroke="#B0B0B0" stroke-width="0.8"/></svg>
<div class="t" style="left:619px;top:320px;color:#A3A3A3"><u>C</u>onfidence intervals</div>
<div class="t" style="left:626px;top:340px;color:#A3A3A3"><u>L</u>evel (%):</div>
<div class="t" style="left:619px;top:363px;color:#A3A3A3">S<u>t</u>andard error</div>
<div class="t" style="left:626px;top:383px;color:#A3A3A3">M<u>u</u>ltiplier:</div>
<div class="t" style="left:619px;top:406px;color:#A3A3A3">Standard de<u>v</u>iation</div>
<div class="t" style="left:626px;top:426px;color:#A3A3A3">Multi<u>p</u>lier:</div>
<div style="left:687px;top:337px;width:70px;height:21px;border:1px solid #C4C4C4;background:#E3EFFC"></div>
<div class="t" style="left:690px;top:341px;color:#A3A3A3">95</div>
<div style="left:687px;top:380px;width:70px;height:21px;border:1px solid #C4C4C4;background:#E3EFFC"></div>
<div class="t" style="left:690px;top:384px;color:#A3A3A3">2</div>
<div style="left:687px;top:423px;width:70px;height:21px;border:1px solid #C4C4C4;background:#E3EFFC"></div>
<div class="t" style="left:690px;top:427px;color:#A3A3A3">2</div>
<div class="t" style="left:596px;top:474px;"><u>B</u>ar Style:</div>
<div style="left:595px;top:491px;width:343px;height:22px;border:1px solid #3D94EC;border-radius:2px;background:#fff;box-shadow:inset 0 0 0 1px #A8D2F8"></div>
<div style="left:918px;top:492px;width:19px;height:20px;background:linear-gradient(#D6E9FC,#A8CFF6)"></div>
<svg style="left:921px;top:498px" width="12" height="8"><path d="M1 1.5H11L6 6.5Z" fill="#555"/></svg>
<div style="left:602px;top:496px;width:7px;height:12px;border:1px solid #111;background:linear-gradient(90deg,#1E50B0,#4C88E0)"></div>
<div class="t" style="left:618px;top:496px;">Bar</div>
</body></html>
